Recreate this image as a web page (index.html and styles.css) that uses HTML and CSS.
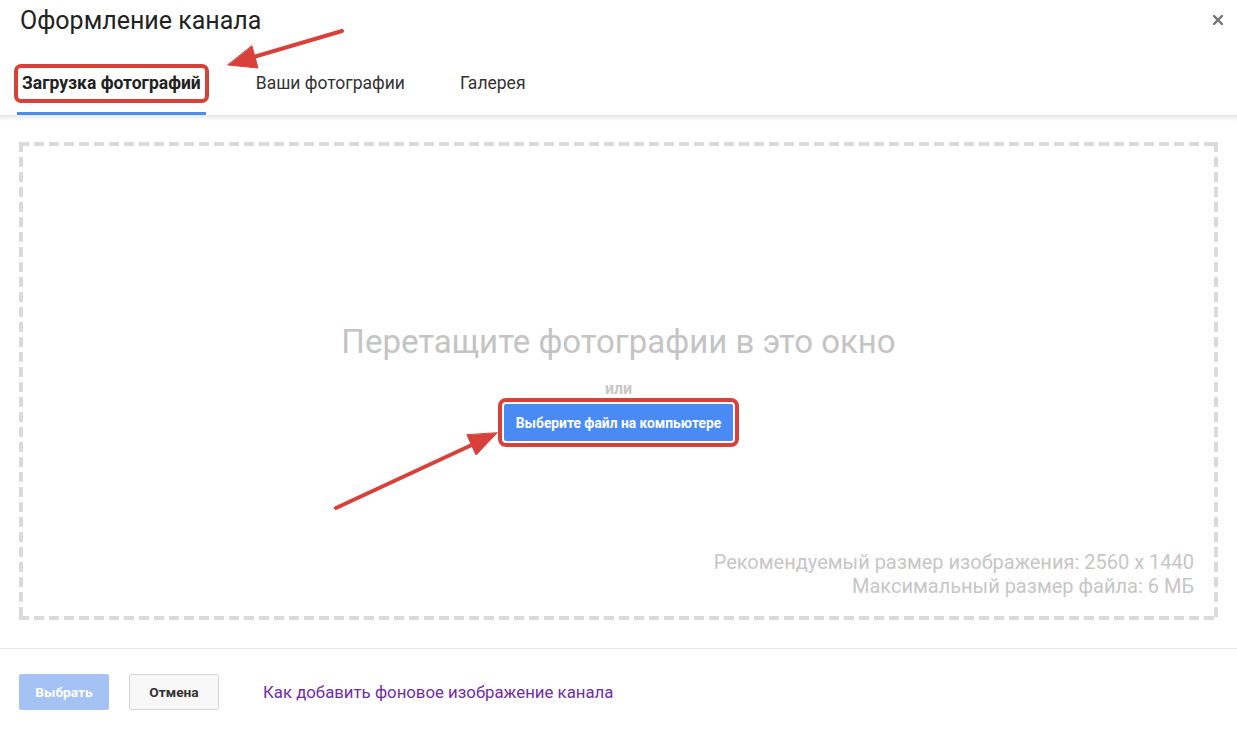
FILE: index.html
```html
<!DOCTYPE html>
<html lang="ru">
<head>
<meta charset="utf-8">
<title>Оформление канала</title>
<link rel="stylesheet" href="styles.css">
</head>
<body>
<div class="dialog">
  <header class="head">
    <h1 class="title">Оформление канала</h1>
    <button class="close" aria-label="Закрыть">
      <svg width="10" height="10" viewBox="0 0 10 10"><path d="M1 1L9 9M9 1L1 9" stroke="#777" stroke-width="2.4" stroke-linecap="square"/></svg>
    </button>
  </header>
  <nav class="tabs">
    <div class="tab active"><span class="mark">Загрузка фотографий</span></div>
    <div class="tab">Ваши фотографии</div>
    <div class="tab">Галерея</div>
  </nav>
  <div class="shadow"></div>
  <main class="body">
    <section class="drop">
      <div class="center">
        <div class="drag">Перетащите фотографии в это окно</div>
        <div class="or">или</div>
        <button class="pick">Выберите файл на компьютере</button>
      </div>
      <div class="hints">
        <div>Рекомендуемый размер изображения: 2560 x 1440</div>
        <div>Максимальный размер файла: 6 МБ</div>
      </div>
    </section>
  </main>
  <footer class="foot">
    <button class="btn primary">Выбрать</button>
    <button class="btn cancel">Отмена</button>
    <a class="help" href="#">Как добавить фоновое изображение канала</a>
  </footer>
</div>
<svg class="arrows" width="1237" height="729" viewBox="0 0 1237 729">
  <g stroke="#d8413a" stroke-width="4" stroke-linecap="round" fill="#d8413a">
    <line x1="342" y1="31" x2="250" y2="58"/>
    <polygon points="228,65 258,68 252,46" stroke-width="1" stroke-linejoin="round"/>
    <line x1="336" y1="508" x2="476" y2="443"/>
    <polygon points="497,433 476,455 467,435" stroke-width="1" stroke-linejoin="round"/>
  </g>
</svg>
</body>
</html>
```

FILE: styles.css
```css
* { box-sizing: border-box; }
html, body { margin: 0; padding: 0; background: #fff; }
body {
  font-family: Roboto, "Noto Sans", "Liberation Sans", sans-serif;
  color: #222;
  width: 1237px;
  height: 729px;
  overflow: hidden;
  position: relative;
}
.dialog { display: flex; flex-direction: column; height: 729px; }
.head {
  display: flex;
  justify-content: space-between;
  align-items: flex-start;
  padding: 6px 13px 0 20px;
  height: 52px;
}
.title {
  margin: 0;
  font-size: 25px;
  font-weight: 400;
  color: #222;
  line-height: 30px;
}
.close {
  border: 0;
  background: none;
  padding: 0;
  margin-top: 8px;
  width: 12px;
  height: 12px;
  display: flex;
  align-items: center;
  justify-content: center;
}
.tabs {
  display: flex;
  gap: 45px;
  padding-left: 17px;
  height: 63px;
  align-items: stretch;
}
.tab {
  padding: 2px 5px 0 5px;
  font-size: 17.5px;
  color: #333;
  display: flex;
  align-items: center;
  border-bottom: 3px solid transparent;
}
.tab.active {
  font-weight: 700;
  color: #222;
  border-bottom-color: #4d8ce6;
}
.mark { position: relative; }
.mark::after {
  content: "";
  position: absolute;
  left: -8px; right: -8px; top: -9px; bottom: -10px;
  border: 4px solid #d8413a;
  border-radius: 7px;
}
.shadow {
  height: 6px;
  background: linear-gradient(#e6e6e6, rgba(255,255,255,0));
}
.body { padding: 21px 19px 0 19px; }
.drop {
  height: 478px;
  position: relative;
  display: flex;
  flex-direction: column;
  padding: 0 24px 22px 0;
  background:
    repeating-linear-gradient(90deg, #dadada 0 10px, transparent 10px 15px) left top / 100% 4px no-repeat,
    repeating-linear-gradient(90deg, #dadada 0 10px, transparent 10px 15px) left bottom / 100% 4px no-repeat,
    repeating-linear-gradient(180deg, #dadada 0 10px, transparent 10px 15px) left top / 4px 100% no-repeat,
    repeating-linear-gradient(180deg, #dadada 0 10px, transparent 10px 15px) right top / 4px 100% no-repeat;
}
.center {
  flex: 1;
  display: flex;
  flex-direction: column;
  align-items: center;
  padding-top: 180px;
  padding-left: 24px;
}
.drag {
  font-size: 33px;
  color: #c4c4c4;
  line-height: 40px;
}
.or {
  font-size: 16px;
  font-weight: 700;
  color: #c8c8c8;
  margin-top: 17px;
  line-height: 20px;
}
.pick {
  margin-top: 5px;
  width: 229px;
  height: 37px;
  border: 0;
  border-radius: 2px;
  background: #4a8af4;
  color: #fff;
  font-family: inherit;
  font-size: 13.8px;
  font-weight: 700;
  outline: 4px solid #d8413a;
  outline-offset: 2px;
}
.hints {
  text-align: right;
  font-size: 20px;
  color: #c6c6c6;
  line-height: 24px;
}
.foot {
  margin-top: 28px;
  border-top: 1px solid #e8e8e8;
  display: flex;
  align-items: center;
  padding: 25px 19px 0 19px;
  gap: 20px;
}
.btn {
  width: 90px;
  height: 36px;
  border-radius: 2px;
  font-family: inherit;
  font-size: 13.7px;
  font-weight: 700;
}
.primary { background: #a4c2f4; color: #fff; border: 0; }
.cancel { background: #f8f8f8; color: #333; border: 1px solid #d6d6d6; }
.help {
  margin-left: 24px;
  color: #6f2da8;
  text-decoration: none;
  font-size: 16.8px;
}
.arrows { position: absolute; left: 0; top: 0; pointer-events: none; }
```
